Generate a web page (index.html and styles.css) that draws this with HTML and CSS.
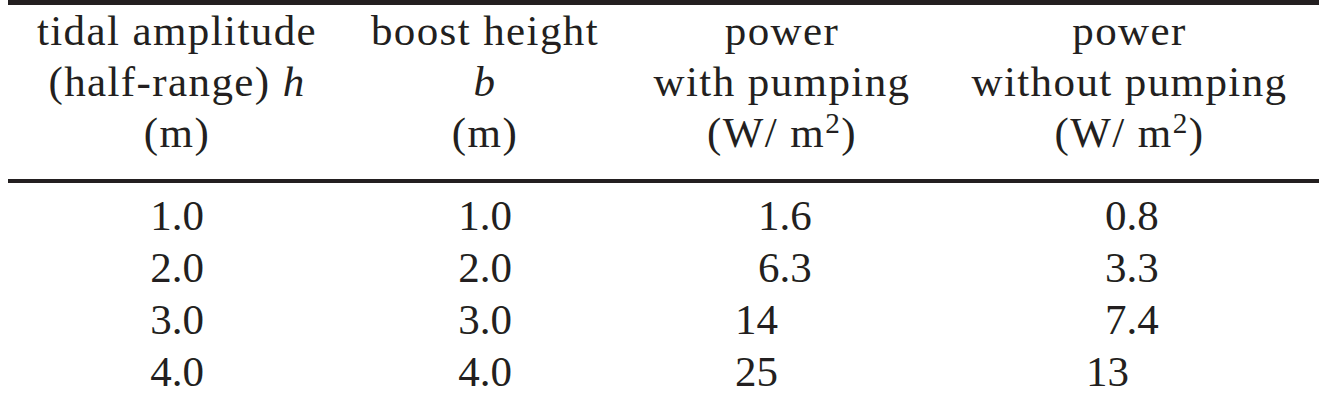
FILE: index.html
```html
<!DOCTYPE html>
<html lang="en">

<head>
    <meta charset="UTF-8">
    <meta name="viewport" content="width=device-width, initial-scale=1.0">
    <link rel="stylesheet" href="styles.css">
</head>

<body>
    <!-- Table: tidal power with and without pumping -->
    <table class="tide-table">
        <colgroup>
            <col class="col-amp">
            <col class="col-boost">
            <col class="col-with">
            <col class="col-without">
        </colgroup>
        <thead>
            <tr>
                <th>tidal amplitude<br>(half-range) <i>h</i><br>(m)</th>
                <th>boost height<br><i>b</i><br>(m)</th>
                <th>power<br>with pumping<br>(W/ m<sup>2</sup>)</th>
                <th>power<br>without pumping<br>(W/ m<sup>2</sup>)</th>
            </tr>
        </thead>
        <tbody>
            <tr class="first-row">
                <td>1.0</td>
                <td>1.0</td>
                <td class="num-with"><span class="indent-with">1.6</span></td>
                <td class="num-without"><span class="indent-without">0.8</span></td>
            </tr>
            <tr>
                <td>2.0</td>
                <td>2.0</td>
                <td class="num-with"><span class="indent-with">6.3</span></td>
                <td class="num-without"><span class="indent-without">3.3</span></td>
            </tr>
            <tr>
                <td>3.0</td>
                <td>3.0</td>
                <td class="num-with">14</td>
                <td class="num-without"><span class="indent-without">7.4</span></td>
            </tr>
            <tr>
                <td>4.0</td>
                <td>4.0</td>
                <td class="num-with">25</td>
                <td class="num-without">13</td>
            </tr>
        </tbody>
    </table>
</body>

</html>
```

FILE: styles.css
```css
/* Seite */
body {
    margin: 0 0 0 8px;
    background-color: #fff;
    color: #231f20;
    font-family: "Liberation Serif", "Times New Roman", serif;
    font-size: 43px;
}

/* Tabelle */
.tide-table {
    width: 1311px;
    table-layout: fixed;
    border-collapse: separate;
    border-spacing: 0;
}

.col-amp { width: 338px; }
.col-boost { width: 278px; }
.col-with { width: 316px; }
.col-without { width: 379px; }

/* Kopfzeile mit den Linien oben und unten */
.tide-table th {
    font-weight: normal;
    text-align: center;
    line-height: 51px;
    letter-spacing: 1.4px;
    padding: 0 0 21px 0;
    border-top: 5px solid #231f20;
    border-bottom: 4px solid #231f20;
}

.tide-table sup {
    font-size: 0.68em;
    line-height: 0;
    vertical-align: 0.48em;
}

/* Datenzeilen */
.tide-table td {
    text-align: center;
    line-height: 52px;
    padding: 0;
}

.tide-table .first-row td {
    padding-top: 7px;
}

/* Spalten mit ausgerichteten Zahlen */
.tide-table td.num-with {
    text-align: left;
    padding-left: 111px;
}

.tide-table td.num-without {
    text-align: left;
    padding-left: 146px;
}

.indent-with {
    padding-left: 23px;
}

.indent-without {
    padding-left: 19px;
}
```
